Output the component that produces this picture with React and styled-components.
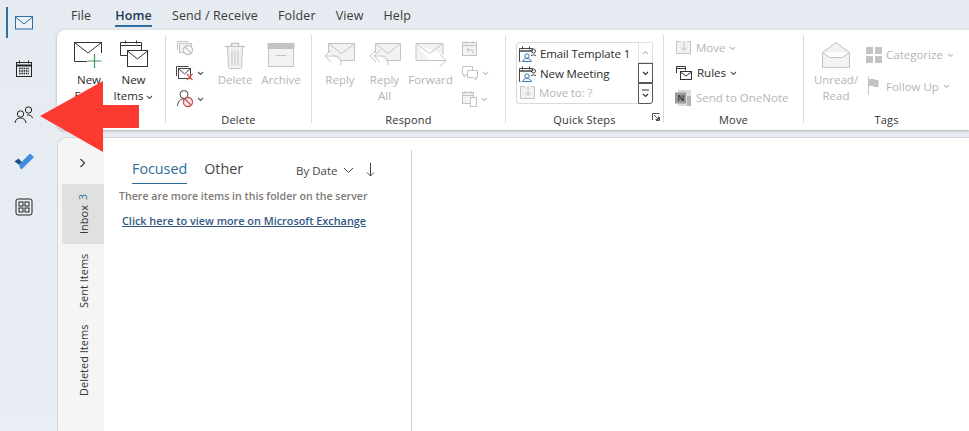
import React from 'react';
import styled, { createGlobalStyle } from 'styled-components';

const GlobalStyle = createGlobalStyle`
  html, body {
    margin: 0;
    padding: 0;
    overflow: hidden;
    font-family: "Open Sans", "Noto Sans", sans-serif;
  }
`;

const dim = '#c3c3c3';
const dimFill = '#f2f2f2';
const ink = '#2b2b2b';

const Page = styled.div`
  position: relative;
  display: flex;
  width: 969px;
  height: 431px;
  overflow: hidden;
  background: linear-gradient(180deg, #e6ebf2 0%, #e9eef5 100%);
`;

const Rail = styled.nav`
  display: flex;
  flex-direction: column;
  flex: 0 0 57px;
`;

const RailItem = styled.div`
  position: relative;
  display: flex;
  align-items: center;
  justify-content: center;
  width: 48px;
  height: 46px;

  &::before {
    content: '';
    display: ${(p) => (p.$active ? 'block' : 'none')};
    position: absolute;
    left: 6px;
    top: 7px;
    width: 2px;
    height: 31px;
    background: #2f6d9e;
  }
`;

const Main = styled.div`
  display: flex;
  flex-direction: column;
  flex: 1;
  min-width: 0;
`;

const MenuBar = styled.div`
  display: flex;
  gap: 20px;
  height: 30px;
  padding-left: 14px;
`;

const MenuTab = styled.div`
  position: relative;
  height: 30px;
  margin-left: ${(p) => (p.$active ? 4 : 0)}px;
  font-size: 12.5px;
  letter-spacing: 0.12px;
  line-height: 31px;
  color: ${(p) => (p.$active ? '#1d3a52' : '#3a3a3a')};
  font-weight: ${(p) => (p.$active ? 600 : 400)};

  &::after {
    content: '';
    display: ${(p) => (p.$active ? 'block' : 'none')};
    position: absolute;
    left: 0;
    right: 0;
    bottom: 3px;
    height: 2px;
    background: #2f6d9e;
  }
`;

const Ribbon = styled.div`
  display: flex;
  flex: 0 0 100px;
  padding-top: 5px;
  box-sizing: border-box;
  background: #fff;
  border-radius: 8px 0 0 8px;
  box-shadow: 0 1px 3px rgba(0, 0, 0, 0.28);
`;

const Group = styled.section`
  display: flex;
  flex-direction: column;
  flex: 0 0 ${(p) => p.$w}px;
  box-sizing: border-box;
  height: 88px;
  border-right: ${(p) => (p.$last ? '0' : '1px solid #dcdcdc')};
`;

const GroupBody = styled.div`
  display: flex;
  flex: 1;
  min-height: 0;
  padding-left: ${(p) => p.$pad || 0}px;
`;

const GroupLabel = styled.div`
  position: relative;
  height: 16px;
  margin-bottom: -5px;
  font-size: 11px;
  line-height: 16px;
  text-align: center;
  color: #333;
  letter-spacing: 0.2px;
`;

const Launcher = styled.span`
  position: absolute;
  right: 3px;
  top: 1px;
  display: flex;
`;

const BigButton = styled.div`
  display: flex;
  flex-direction: column;
  align-items: center;
  flex: 0 0 ${(p) => p.$w}px;
  padding-top: 3px;
  font-size: 11.5px;
  line-height: 16px;
  text-align: center;
  color: ${(p) => (p.$off ? '#b5b5b5' : ink)};
`;

const BigIcon = styled.div`
  display: flex;
  align-items: center;
  justify-content: center;
  height: 34px;
`;

const Stack = styled.div`
  display: flex;
  flex-direction: column;
  flex: 0 0 ${(p) => p.$w}px;
  margin-left: ${(p) => p.$ml || 0}px;
`;

const SmallRow = styled.div`
  display: flex;
  align-items: center;
  gap: ${(p) => p.$gap || 3}px;
  height: ${(p) => p.$h || 25.5}px;
  font-size: 11.5px;
  color: ${(p) => (p.$off ? '#b5b5b5' : ink)};
`;

const Caret = styled.span`
  display: inline-flex;
  margin-top: 1px;
`;

const GalleryWrap = styled.div`
  display: flex;
  margin-top: 7px;
  height: 62px;
`;

const Gallery = styled.div`
  display: flex;
  flex-direction: column;
  width: 122px;
  box-sizing: border-box;
  padding: 1px 0 0 2px;
  border: 1px solid #d9d9d9;
  border-right: 0;
  border-radius: 4px 0 0 4px;
`;

const GalleryItem = styled.div`
  display: flex;
  align-items: center;
  gap: 3px;
  height: 19.5px;
  font-size: 11.5px;
  letter-spacing: -0.12px;
  white-space: nowrap;
  color: ${(p) => (p.$off ? '#b5b5b5' : ink)};
`;

const Scroller = styled.div`
  display: flex;
  flex-direction: column;
  width: 15px;
`;

const ScrollButton = styled.div`
  display: flex;
  flex-direction: column;
  align-items: center;
  justify-content: center;
  gap: 1px;
  flex: 1;
  box-sizing: border-box;
  border: 1px solid ${(p) => (p.$off ? '#e2e2e2' : '#555')};
  border-radius: ${(p) => p.$radius || '0'};
`;

const Workspace = styled.div`
  display: flex;
  flex: 1;
  min-height: 0;
  margin-top: 7px;
  background: #fff;
  border: 1px solid #d3d7dd;
  border-width: 1px 0 0 1px;
  border-radius: 10px 0 0 0;
  overflow: hidden;
`;

const FolderStrip = styled.aside`
  display: flex;
  flex-direction: column;
  flex: 0 0 46px;
  padding: 46px 0 0 4px;
  box-sizing: border-box;
  background: #f5f5f5;
  position: relative;
`;

const Expand = styled.span`
  position: absolute;
  left: 21px;
  top: 20px;
  display: flex;
`;

const FolderTab = styled.div`
  display: flex;
  align-items: center;
  justify-content: center;
  gap: 6px;
  height: ${(p) => p.$h}px;
  writing-mode: vertical-rl;
  transform: rotate(180deg);
  font-size: 11px;
  color: #333;
  background: ${(p) => (p.$active ? '#e0e0e0' : 'transparent')};
`;

const Count = styled.span`
  color: #2f6d9e;
  font-size: 10.5px;
`;

const ListPane = styled.div`
  flex: 0 0 308px;
  box-sizing: border-box;
  margin-top: 12px;
  padding-left: 15px;
  border-right: 1px solid #cfcfcf;
`;

const ListHeader = styled.div`
  display: flex;
  align-items: flex-start;
  height: 34px;
  padding-left: 13px;
`;

const Pivot = styled.div`
  height: 34px;
  box-sizing: border-box;
  margin-right: 17px;
  font-size: 14.3px;
  line-height: 38px;
  color: ${(p) => (p.$active ? '#2d6c96' : '#444')};
  border-bottom: ${(p) => (p.$active ? '1px solid #2d6c96' : '0')};
`;

const SortBy = styled.div`
  display: flex;
  align-items: center;
  gap: 5px;
  height: 40px;
  margin-left: 36px;
  font-size: 11.5px;
  white-space: nowrap;
  color: #444;
`;

const SortArrow = styled.span`
  display: flex;
  margin-left: 7px;
`;

const Notice = styled.div`
  margin-top: 5px;
  font-size: 10.6px;
  line-height: 15px;
  font-weight: 600;
  white-space: nowrap;
  color: #7d7a76;
`;

const MoreLink = styled.a`
  display: block;
  margin: 9px 0 0 3px;
  font-size: 10.85px;
  line-height: 15px;
  font-weight: 600;
  white-space: nowrap;
  color: #34587f;
  text-decoration: underline;
`;

const ReadingPane = styled.div`
  flex: 1;
  background: #fff;
`;

const Callout = styled.svg`
  position: absolute;
  left: 0;
  top: 0;
  pointer-events: none;
`;

const Svg = ({ w, h, children, ...rest }) => (
  <svg width={w} height={h} viewBox={`0 0 ${w} ${h}`} fill="none" strokeWidth="1" {...rest}>
    {children}
  </svg>
);

const Chevron = ({ color = '#555', s = 7, up = false }) => (
  <Caret>
    <svg width={s} height={s - 2} viewBox="0 0 7 5" fill="none">
      <path d={up ? 'M1 4l2.500-2.500L6 4' : 'M1 1l2.500 2.500L6 1'} stroke={color} strokeWidth="1.1" />
    </svg>
  </Caret>
);

const MailNav = () => (
  <Svg w={20} h={16}>
    <rect x="1.500" y="1.500" width="17" height="12.500" stroke="#2f6d9e" fill="#eaf1f8" />
    <path d="M1.500 2l8.500 7 8.500-7" stroke="#2f6d9e" />
  </Svg>
);

const CalendarNav = () => (
  <Svg w={20} h={20}>
    <rect x="2.500" y="3.500" width="15" height="14" stroke="#222" />
    <path d="M2.500 6.500h15" stroke="#222" strokeWidth="2" />
    <path d="M5.500 1.500v3M14.500 1.500v3" stroke="#222" />
    <path d="M5 9.500h10M5 12h10M5 14.500h10" stroke="#222" strokeWidth="1.400" strokeDasharray="1.500 .8" />
  </Svg>
);

const PeopleNav = () => (
  <Svg w={22} h={20}>
    <circle cx="7.500" cy="9" r="3.200" stroke="#222" />
    <path d="M2 18c.3-3.200 2.300-5 5.500-5s5 1.800 5.500 5" stroke="#222" />
    <circle cx="15.500" cy="5" r="3.200" stroke="#222" />
    <path d="M14 10c2.500-.5 5 .8 5.500 3" stroke="#222" />
  </Svg>
);

const CheckNav = () => (
  <Svg w={22} h={18}>
    <path d="M1.500 9.500l4-3 3.500 3.500L6.500 13z" fill="#1d4f91" />
    <path d="M6 12.500L17 1.500l4 3.500L9.500 16.500c-.8.800-1.500.8-2.300 0z" fill="#3f8fdc" />
  </Svg>
);

const AppsNav = () => (
  <Svg w={18} h={18}>
    <rect x="1" y="1" width="16" height="16" rx="2" stroke="#222" />
    <rect x="4" y="4" width="4" height="4" stroke="#222" />
    <rect x="10" y="4" width="4" height="4" stroke="#222" />
    <rect x="4" y="10" width="4" height="4" stroke="#222" />
    <rect x="10" y="10" width="4" height="4" stroke="#222" />
  </Svg>
);

const NewEmailIcon = () => (
  <Svg w={32} h={32}>
    <path d="M14 22.500H1.500v-19h27V14" stroke="#333" />
    <path d="M1.500 3.500L15 14 28.500 3.500" stroke="#333" />
    <path d="M21.500 15v14M14.500 22h14" stroke="#3f9a5a" strokeWidth="1.200" />
  </Svg>
);

const NewItemsIcon = () => (
  <Svg w={30} h={32}>
    <path d="M13 16.500H1.500v-13h21V11" stroke="#333" />
    <path d="M1.500 6.500h21M6.500 1.500v3M17.500 1.500v3" stroke="#333" />
    <rect x="8.500" y="11.500" width="20" height="16" fill="#fff" stroke="#333" />
    <path d="M8.500 12l10 8 10-8" stroke="#333" />
  </Svg>
);

const IgnoreIcon = () => (
  <Svg w={18} h={16}>
    <path d="M1.500 10V1.500h11" stroke={dim} />
    <rect x="3.500" y="3.500" width="12" height="9" stroke={dim} fill={dimFill} />
    <circle cx="12" cy="10" r="4.500" stroke={dim} fill="#fff" strokeWidth="1.400" />
    <path d="M9 7l6 6" stroke={dim} strokeWidth="1.400" />
  </Svg>
);

const CleanIcon = () => (
  <Svg w={18} h={16}>
    <path d="M.5 11V1.500h12" stroke="#444" />
    <rect x="2.500" y="3.500" width="12" height="10" fill="#fff" stroke="#444" />
    <path d="M2.500 3.500L8.500 9l6-5.500" stroke="#444" />
    <path d="M11 9l5.500 6M16.500 9L11 15" stroke="#d9534f" strokeWidth="1.200" />
  </Svg>
);

const JunkIcon = () => (
  <Svg w={18} h={19}>
    <circle cx="8" cy="5.500" r="4" stroke="#444" />
    <path d="M1.500 17c0-4 2.500-7 6.500-7" stroke="#444" />
    <circle cx="12" cy="13" r="4.500" stroke="#c9524e" fill="#fbeeee" strokeWidth="1.300" />
    <path d="M9 10l6 6" stroke="#c9524e" strokeWidth="1.300" />
  </Svg>
);

const TrashIcon = () => (
  <Svg w={22} h={29}>
    <path d="M1 5.500h20M7.500 5V2.500h7V5" stroke={dim} strokeWidth="1.300" />
    <path d="M3.500 6l1 20c0 1 .8 1.500 1.500 1.500h10c.8 0 1.500-.5 1.500-1.500l1-20" stroke={dim} fill={dimFill} />
    <path d="M8 9.500v15M11 9.500v15M14 9.500v15" stroke={dim} />
  </Svg>
);

const ArchiveIcon = () => (
  <Svg w={28} h={26}>
    <rect x="0.500" y="1" width="27" height="5.500" fill={dim} />
    <rect x="1.500" y="6.500" width="25" height="18" stroke={dim} fill={dimFill} />
    <path d="M9 13.500h10" stroke={dim} />
  </Svg>
);

const ReplyIcon = () => (
  <Svg w={32} h={28}>
    <path d="M4.500 12V2.500h26v17H16" stroke={dim} fill={dimFill} />
    <path d="M4.500 2.500l13 10 13-10" stroke={dim} />
    <path d="M1 15l6-6M1 15l6 6M1 15h10c4 0 6 3 6 9" stroke={dim} fill="none" />
  </Svg>
);

const ReplyAllIcon = () => (
  <Svg w={32} h={28}>
    <path d="M6.500 12V2.500h25v17H17" stroke={dim} fill={dimFill} />
    <path d="M6.500 2.500l12.500 10 12.500-10" stroke={dim} />
    <path d="M1 15l6-6M1 15l6 6M5 15l6-6M5 15l6 6M5 15h8c4 0 6 3 6 9" stroke={dim} />
  </Svg>
);

const ForwardIcon = () => (
  <Svg w={32} h={28}>
    <path d="M1 2.500h27v11M1 2.500v17h14" stroke={dim} fill={dimFill} />
    <path d="M1 2.500l13.500 10 13.500-10" stroke={dim} />
    <path d="M12 19.500h19M25 13.500l6 6-6 6" stroke={dim} />
  </Svg>
);

const MeetingReplyIcon = () => (
  <Svg w={17} h={16}>
    <rect x="1.500" y="2.500" width="14" height="13" stroke={dim} fill={dimFill} />
    <path d="M1.500 5.500h14M5 1v3M12 1v3" stroke={dim} />
    <path d="M6 10h5c2 0 2 3 0 3M6 10l2-2M6 10l2 2" stroke={dim} />
  </Svg>
);

const ImIcon = () => (
  <Svg w={18} h={16}>
    <path d="M1.500 1.500h10v8H5l-2 2.500v-2.500H1.500z" stroke={dim} fill="#fff" />
    <path d="M6.500 5.500h10v7h-1.500V15l-2.500-2.500h-6z" stroke={dim} fill="#fff" />
  </Svg>
);

const MoreRespondIcon = () => (
  <Svg w={17} h={17}>
    <rect x="1.500" y="2.500" width="11" height="11" stroke={dim} fill={dimFill} />
    <path d="M1.500 5.500h11M4 1v3M10 1v3" stroke={dim} />
    <rect x="9.500" y="7.500" width="6" height="9" fill="#fff" stroke={dim} />
  </Svg>
);

const TemplateIcon = () => (
  <Svg w={18} h={17}>
    <path d="M1.500 16.500h-1v-13h13V6" stroke="#444" />
    <path d="M.5 6h13" stroke="#444" strokeWidth="1.500" />
    <path d="M3.500 1.500v3M10.500 1.500v3" stroke="#444" />
    <circle cx="8" cy="11" r="2.200" stroke="#3878b0" />
    <path d="M3.500 16.500c.5-2 2.500-3 4.500-3s4 1 4.500 3z" stroke="#3878b0" />
    <circle cx="14.500" cy="6" r="2" stroke="#444" />
    <path d="M12 11c.3-1.500 4.700-1.500 5 0" stroke="#444" />
  </Svg>
);

const MoveIcon = ({ color = dim }) => (
  <Svg w={17} h={15}>
    <path d="M6 1.500H1.500v12h14v-12H12" stroke={color} fill={dimFill} />
    <path d="M9 1v9M6 7.500L9 10.500l3-3" stroke={color} />
  </Svg>
);

const RulesIcon = () => (
  <Svg w={18} h={17}>
    <path d="M1.500 9V2.500h9v4" stroke="#333" />
    <path d="M1.500 4.500h9" stroke="#333" />
    <rect x="5.500" y="7.500" width="11" height="8" fill="#fff" stroke="#333" />
    <path d="M5.500 8l5.500 4 5.500-4" stroke="#333" />
  </Svg>
);

const OneNoteIcon = () => (
  <Svg w={17} h={16}>
    <rect x="3" y="0" width="13" height="16" fill="#dcdcdc" />
    <rect x="12" y="6" width="4" height="10" fill="#b5b5b5" />
    <rect x="0" y="2.500" width="11" height="11" fill="#9a9a9a" />
    <text x="2.200" y="11" fontSize="9" fontWeight="700" fontFamily="Open Sans" fill="#444">N</text>
  </Svg>
);

const UnreadIcon = () => (
  <Svg w={30} h={28}>
    <path d="M1.500 11.500L15 1.500l13.500 10v15h-27z" stroke={dim} fill={dimFill} />
    <path d="M1.500 11.500L9 16.500h12l7.500-5" stroke={dim} fill="#fff" />
  </Svg>
);

const CategorizeIcon = () => (
  <Svg w={16} h={16}>
    <rect x="0" y="0" width="7" height="7" fill={dim} />
    <rect x="9" y="0" width="7" height="7" fill={dim} />
    <rect x="0" y="9" width="7" height="7" fill={dim} />
    <rect x="9" y="9" width="7" height="7" fill={dim} />
  </Svg>
);

const FlagIcon = () => (
  <Svg w={16} h={18}>
    <path d="M2.500 0v18" stroke={dim} />
    <path d="M3 2h6v1h3.500v7H8V9H3z" fill={dim} />
  </Svg>
);

const LauncherIcon = () => (
  <Svg w={8} h={8}>
    <path d="M.5 7V.5H7.500M2 2l4.500 4.500M3.500 6.500h3v-3M7.500 4v3.500H4" stroke="#555" />
  </Svg>
);

function App() {
  return (
    <Page>
      <GlobalStyle />
      <Rail>
        <RailItem $active><MailNav /></RailItem>
        <RailItem><CalendarNav /></RailItem>
        <RailItem><PeopleNav /></RailItem>
        <RailItem><CheckNav /></RailItem>
        <RailItem><AppsNav /></RailItem>
      </Rail>
      <Main>
        <MenuBar>
          <MenuTab>File</MenuTab>
          <MenuTab $active>Home</MenuTab>
          <MenuTab>Send / Receive</MenuTab>
          <MenuTab>Folder</MenuTab>
          <MenuTab>View</MenuTab>
          <MenuTab>Help</MenuTab>
        </MenuBar>
        <Ribbon>
          <Group $w={109}>
            <GroupBody $pad={10}>
              <BigButton $w={44}>
                <BigIcon><NewEmailIcon /></BigIcon>
                New<br />Email
              </BigButton>
              <BigButton $w={45}>
                <BigIcon><NewItemsIcon /></BigIcon>
                New<br />
                <span>Items <Chevron /></span>
              </BigButton>
            </GroupBody>
          </Group>
          <Group $w={146}>
            <GroupBody $pad={10}>
              <Stack $w={36}>
                <SmallRow><IgnoreIcon /></SmallRow>
                <SmallRow><CleanIcon /><Chevron /></SmallRow>
                <SmallRow><JunkIcon /><Chevron /></SmallRow>
              </Stack>
              <BigButton $w={46} $off>
                <BigIcon><TrashIcon /></BigIcon>
                Delete
              </BigButton>
              <BigButton $w={46} $off>
                <BigIcon><ArchiveIcon /></BigIcon>
                Archive
              </BigButton>
            </GroupBody>
            <GroupLabel>Delete</GroupLabel>
          </Group>
          <Group $w={194}>
            <GroupBody $pad={6}>
              <BigButton $w={44} $off>
                <BigIcon><ReplyIcon /></BigIcon>
                Reply
              </BigButton>
              <BigButton $w={45} $off>
                <BigIcon><ReplyAllIcon /></BigIcon>
                Reply<br />All
              </BigButton>
              <BigButton $w={47} $off>
                <BigIcon><ForwardIcon /></BigIcon>
                Forward
              </BigButton>
              <Stack $w={36} $ml={7}>
                <SmallRow><MeetingReplyIcon /></SmallRow>
                <SmallRow><ImIcon /><Chevron color={dim} /></SmallRow>
                <SmallRow><MoreRespondIcon /><Chevron color={dim} /></SmallRow>
              </Stack>
            </GroupBody>
            <GroupLabel>Respond</GroupLabel>
          </Group>
          <Group $w={158}>
            <GroupBody $pad={10}>
              <GalleryWrap>
                <Gallery>
                  <GalleryItem><TemplateIcon />Email Template 1</GalleryItem>
                  <GalleryItem><TemplateIcon />New Meeting</GalleryItem>
                  <GalleryItem $off><MoveIcon />Move to: ?</GalleryItem>
                </Gallery>
                <Scroller>
                  <ScrollButton $off><Chevron color={dim} up /></ScrollButton>
                  <ScrollButton><Chevron color="#333" /></ScrollButton>
                  <ScrollButton $radius="0 0 3px 0">
                    <svg width="7" height="2" viewBox="0 0 7 2"><path d="M0 1h7" stroke="#333" /></svg>
                    <Chevron color="#333" />
                  </ScrollButton>
                </Scroller>
              </GalleryWrap>
            </GroupBody>
            <GroupLabel>
              Quick Steps
              <Launcher><LauncherIcon /></Launcher>
            </GroupLabel>
          </Group>
          <Group $w={140}>
            <GroupBody $pad={11}>
              <Stack $w={120}>
                <SmallRow $off $gap={4} $h={25}><MoveIcon />Move <Chevron color={dim} /></SmallRow>
                <SmallRow $gap={4} $h={25}><RulesIcon />Rules <Chevron /></SmallRow>
                <SmallRow $off $gap={4} $h={25}><OneNoteIcon />Send to OneNote</SmallRow>
              </Stack>
            </GroupBody>
            <GroupLabel>Move</GroupLabel>
          </Group>
          <Group $w={165} $last>
            <GroupBody $pad={2}>
              <BigButton $w={60} $off>
                <BigIcon><UnreadIcon /></BigIcon>
                Unread/<br />Read
              </BigButton>
              <Stack $w={100}>
                <SmallRow $off $h={39} $gap={4}><CategorizeIcon />Categorize <Chevron color={dim} /></SmallRow>
                <SmallRow $off $h={24} $gap={4}><FlagIcon />Follow Up <Chevron color={dim} /></SmallRow>
              </Stack>
            </GroupBody>
            <GroupLabel>Tags</GroupLabel>
          </Group>
        </Ribbon>
        <Workspace>
          <FolderStrip>
            <Expand>
              <svg width="7" height="10" viewBox="0 0 7 10" fill="none">
                <path d="M1.500 1l4 4-4 4" stroke="#444" strokeWidth="1.300" />
              </svg>
            </Expand>
            <FolderTab $active $h={60}>Inbox <Count>3</Count></FolderTab>
            <FolderTab $h={74}>Sent Items</FolderTab>
            <FolderTab $h={85}>Deleted Items</FolderTab>
          </FolderStrip>
          <ListPane>
            <ListHeader>
              <Pivot $active>Focused</Pivot>
              <Pivot>Other</Pivot>
              <SortBy>
                By Date
                <svg width="11" height="7" viewBox="0 0 11 7" fill="none">
                  <path d="M1 1l4.500 4.500L10 1" stroke="#444" />
                </svg>
                <SortArrow>
                  <svg width="9" height="14" viewBox="0 0 9 14" fill="none">
                    <path d="M4.500 0v13M1 9.500l3.500 3.500L8 9.500" stroke="#444" />
                  </svg>
                </SortArrow>
              </SortBy>
            </ListHeader>
            <Notice>There are more items in this folder on the server</Notice>
            <MoreLink>Click here to view more on Microsoft Exchange</MoreLink>
          </ListPane>
          <ReadingPane />
        </Workspace>
      </Main>
      <Callout width="969" height="431" viewBox="0 0 969 431">
        <path d="M40 116L103 81v24h36v23h-36v24z" fill="#fc3a32" />
      </Callout>
    </Page>
  );
}

export default App;
